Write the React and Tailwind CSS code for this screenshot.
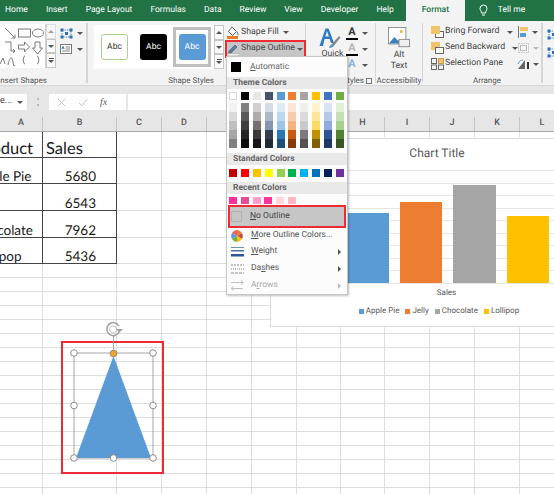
import React from 'react';

const tabs = ['Home', 'Insert', 'Page Layout', 'Formulas', 'Data', 'Review', 'View', 'Developer', 'Help'];

const themeCols = [
  ['bg-[#f2f2f2]', 'bg-[#d9d9d9]', 'bg-[#bfbfbf]', 'bg-[#a6a6a6]', 'bg-[#808080]'],
  ['bg-[#7f7f7f]', 'bg-[#595959]', 'bg-[#404040]', 'bg-[#262626]', 'bg-[#0d0d0d]'],
  ['bg-[#d0cece]', 'bg-[#afabab]', 'bg-[#767171]', 'bg-[#3a3838]', 'bg-[#171616]'],
  ['bg-[#d6dce5]', 'bg-[#adb9ca]', 'bg-[#8497b0]', 'bg-[#333f50]', 'bg-[#222a35]'],
  ['bg-[#deebf7]', 'bg-[#bdd7ee]', 'bg-[#9dc3e6]', 'bg-[#2e75b6]', 'bg-[#1f4e79]'],
  ['bg-[#fbe5d6]', 'bg-[#f8cbad]', 'bg-[#f4b183]', 'bg-[#c55a11]', 'bg-[#843c0c]'],
  ['bg-[#ededed]', 'bg-[#dbdbdb]', 'bg-[#c9c9c9]', 'bg-[#7b7b7b]', 'bg-[#525252]'],
  ['bg-[#fff2cc]', 'bg-[#ffe699]', 'bg-[#ffd966]', 'bg-[#bf9000]', 'bg-[#7f6000]'],
  ['bg-[#dae3f3]', 'bg-[#b4c7e7]', 'bg-[#8faadc]', 'bg-[#2f5597]', 'bg-[#1f3864]'],
  ['bg-[#e2f0d9]', 'bg-[#c5e0b4]', 'bg-[#a9d18e]', 'bg-[#548235]', 'bg-[#385723]'],
];
const themeTop = ['bg-white border border-[#d9d9d9]', 'bg-black', 'bg-[#e7e6e6]', 'bg-[#44546a]', 'bg-[#5b9bd5]', 'bg-[#ed7d31]', 'bg-[#a5a5a5]', 'bg-[#ffc000]', 'bg-[#4472c4]', 'bg-[#70ad47]'];
const standard = ['bg-[#c00000]', 'bg-[#ff0000]', 'bg-[#ffc000]', 'bg-[#ffff00]', 'bg-[#92d050]', 'bg-[#00b050]', 'bg-[#00b0f0]', 'bg-[#0070c0]', 'bg-[#002060]', 'bg-[#7030a0]'];
const recent = ['bg-[#ff2d9a]', 'bg-[#e64a9a]', 'bg-[#ff9ccc]', 'bg-[#ff3399]', 'bg-[#ffd6dc]', 'bg-[#ffb9c0]'];

const colWidths = ['w-[43px]', 'w-[74px]', 'w-[45px]', 'w-[45px]', 'w-[45px]', 'w-[45px]', 'w-[44px]', 'w-[44px]', 'w-[45px]', 'w-[45px]', 'w-[45px]', 'w-[45px]'];
const colNames = ['A', 'B', 'C', 'D', 'E', 'F', 'G', 'H', 'I', 'J', 'K', 'L'];

const tableRows = [
  { h: 'h-[26px]', a: 'Product', b: 'Sales', head: true, ml: '-ml-[24px]' },
  { h: 'h-[26px]', a: 'Apple Pie', b: '5680', ml: '-ml-[25px]' },
  { h: 'h-[27px]', a: 'Jelly', b: '6543', ml: '-ml-[28px]' },
  { h: 'h-[27px]', a: 'Chocolate', b: '7962', ml: '-ml-[27px]' },
  { h: 'h-[26px]', a: 'Lollipop', b: '5436', ml: '-ml-[25px]' },
];

const Caret = ({ className = 'border-t-[#555]' }) => (
  <span className={`inline-block w-0 h-0 border-x-[3px] border-x-transparent border-t-[3px] ${className}`} />
);

const ScrollBtn = ({ kind, className = '' }) => (
  <div className={`flex-1 flex flex-col items-center justify-center gap-[1px] bg-[#fafafa] border border-[#c6c6c6] ${className}`}>
    {kind === 'more' && <span className="w-[5px] h-px bg-[#555]" />}
    {kind === 'up' ? (
      <span className="w-0 h-0 border-x-[3px] border-x-transparent border-b-[3px] border-b-[#555]" />
    ) : (
      <Caret />
    )}
  </div>
);

const GroupLabel = ({ children, className = '' }) => (
  <div className={`h-[10px] leading-[10px] text-[8px] text-[#555] whitespace-nowrap ${className}`}>{children}</div>
);

const ShapesGallery = () => (
  <svg width="45" height="44" viewBox="0 0 45 44" fill="none" stroke="#6b6b6b" strokeWidth="0.9">
    <path d="M5 4l10 10M15 14v-3.500M15 14h-3.500" />
    <rect x="18.500" y="5" width="12" height="8" />
    <ellipse cx="38" cy="9" rx="5.500" ry="4" />
    <path d="M5 18h6v9h4M15 27l-2-2M15 27l-2 2" />
    <path d="M18.500 21h6v-3l5 5-5 5v-3h-6z" />
    <path d="M35 18h5v6h2.500l-5 6-5-6H35z" />
    <path d="M0 40l3-6 2 6" />
    <path d="M8 41c2-9 4-9 5-3s1 4 2 3" />
    <path d="M25 32c-2 0-1 3-2 4 1 1 0 4 2 4M37 32c2 0 1 3 2 4-1 1 0 4-2 4" />
  </svg>
);

const EditShapeIcon = () => (
  <svg width="13" height="11" viewBox="0 0 13 11" fill="#2f6fb5">
    <path d="M2 2h9v7H2z" fill="none" stroke="#2f6fb5" strokeWidth="0.8" strokeDasharray="1.500 1" />
    <rect x="0.500" y="0.500" width="3" height="3" />
    <rect x="9.500" y="0.500" width="3" height="3" />
    <rect x="0.500" y="7.500" width="3" height="3" />
    <rect x="9.500" y="7.500" width="3" height="3" />
    <rect x="5" y="4" width="3" height="3" />
  </svg>
);

const TextBoxIcon = () => (
  <svg width="12" height="10" viewBox="0 0 12 10" fill="none">
    <rect x="0.500" y="0.500" width="11" height="9" fill="#fff" stroke="#7a7a7a" />
    <path d="M5.500 3h4.500M5.500 5h4.500M2 7h8" stroke="#888" />
    <path d="M2 5l1-2.500L4 5" stroke="#2f6fb5" />
  </svg>
);

const AbcSwatch = ({ className }) => (
  <div className={`w-[27px] h-[26px] rounded-[3px] flex items-center justify-center text-[8.500px] ${className}`}>Abc</div>
);

const FillIcon = () => (
  <svg width="12" height="13" viewBox="0 0 12 13" fill="none">
    <path d="M5 1l4.500 4.500L5.500 9.500 1.500 5.500z" fill="#fff" stroke="#666" />
    <path d="M10 6c1 1.500 1.500 2.500 0.800 3.200" stroke="#5a8fc7" strokeWidth="1.200" />
    <rect y="10" width="11" height="3" fill="#ed7d31" />
  </svg>
);

const PenIcon = () => (
  <svg width="12" height="13" viewBox="0 0 12 13" fill="none">
    <path d="M2 8l6-6 2 2-6 6-2.500 0.500z" fill="#5b7ca3" stroke="#3d5573" strokeWidth="0.600" />
    <rect y="10.500" width="12" height="2.500" fill="#eee" stroke="#999" strokeWidth="0.500" />
  </svg>
);

const QuickStylesIcon = () => (
  <svg width="22" height="22" viewBox="0 0 22 22" fill="none">
    <path d="M0.500 19L6.500 1.500h3L15 16h-3l-1.300-4H5.500L4 19zM6.300 9.500h3.600L8 4z" fill="#2f78c4" />
    <path d="M12 18l8-9 1.500 1.500-7.500 9.500z" fill="#8a8a8a" />
    <path d="M10 21c1-3 2-4 3.500-3.500l1 1c-0.500 2-2.500 2.500-4.500 2.500z" fill="#5b9bd5" />
  </svg>
);

const LetterIcon = ({ bar, outline, blue }) => (
  <div className="w-[12px] h-[13px] flex flex-col items-center">
    <span
      className={`text-[11px] leading-[10px] font-bold ${blue ? 'text-[#8fb6df]' : outline ? 'text-[#b5b5b5]' : 'text-[#333]'}`}
    >
      A
    </span>
    {bar && <span className="w-[12px] h-[2px] bg-black mt-[1px]" />}
  </div>
);

const AltTextIcon = () => (
  <svg width="22" height="22" viewBox="0 0 24 24" fill="none">
    <rect x="0.500" y="0.500" width="19" height="18" fill="#fff" stroke="#8a8a8a" />
    <circle cx="14.500" cy="5" r="1.800" fill="#f2b84b" />
    <path d="M1 18l6-7 4 4 2-2 3 5z" fill="#3f7fbf" />
    <rect x="12" y="13.500" width="11.500" height="8" fill="#f0f0f0" stroke="#8a8a8a" />
  </svg>
);

const BringForwardIcon = () => (
  <svg width="13" height="12" viewBox="0 0 13 12">
    <rect x="4.500" y="5.500" width="8" height="6" fill="#fff" stroke="#666" />
    <rect x="0" y="0" width="9" height="8" fill="#f0c36d" />
  </svg>
);

const SendBackwardIcon = () => (
  <svg width="13" height="12" viewBox="0 0 13 12">
    <rect x="0" y="0" width="9" height="8" fill="#f0c36d" />
    <rect x="4.500" y="5.500" width="8" height="6" fill="#fff" stroke="#666" />
  </svg>
);

const SelectionPaneIcon = () => (
  <svg width="13" height="12" viewBox="0 0 13 12" fill="none">
    <rect x="0.500" y="0.500" width="5" height="5" stroke="#666" />
    <rect x="0.500" y="7" width="5" height="4.500" stroke="#666" />
    <rect x="7.500" y="0.500" width="5" height="5" fill="#f0c36d" stroke="#c9a04d" />
    <rect x="7.500" y="7" width="5" height="4.500" stroke="#666" />
  </svg>
);

const AlignIcon = () => (
  <svg width="12" height="12" viewBox="0 0 12 12">
    <rect x="1" y="0" width="1" height="12" fill="#777" />
    <rect x="3" y="1" width="8" height="4" fill="#f0c36d" />
    <rect x="3" y="7" width="6" height="4" fill="#5b9bd5" />
  </svg>
);

const GroupIcon = () => (
  <svg width="13" height="12" viewBox="0 0 13 12" fill="none" stroke="#bdbdbd">
    <rect x="1.500" y="1.500" width="10" height="9" strokeDasharray="1.500 1" />
    <rect x="3.500" y="3.500" width="6" height="5" />
  </svg>
);

const RotateIcon = () => (
  <svg width="13" height="11" viewBox="0 0 13 11">
    <path d="M1 10L8 1v9z" fill="#666" />
    <path d="M10 3h2v7h-2z" fill="#333" />
    <path d="M1 5c1-3 3-4 5-4" stroke="#5b9bd5" fill="none" />
  </svg>
);

const ColorWheel = () => (
  <svg width="12" height="12" viewBox="0 0 12 12">
    <path d="M6 6V0a6 6 0 0 1 5 3z" fill="#ed7d31" />
    <path d="M6 6l5-3a6 6 0 0 1 0 6z" fill="#c0504d" />
    <path d="M6 6l5 3a6 6 0 0 1-5 3z" fill="#ffc000" />
    <path d="M6 6v6a6 6 0 0 1-5-3z" fill="#70ad47" />
    <path d="M6 6L1 9a6 6 0 0 1 0-6z" fill="#5b9bd5" />
    <path d="M6 6L1 3a6 6 0 0 1 5-3z" fill="#e06666" />
  </svg>
);

const WeightIcon = () => (
  <svg width="13" height="10" viewBox="0 0 13 10">
    <rect width="13" height="1" y="0" fill="#6f8fb5" />
    <rect width="13" height="1.500" y="3" fill="#4a6f9e" />
    <rect width="13" height="2.500" y="7" fill="#2f5597" />
  </svg>
);

const DashesIcon = () => (
  <svg width="13" height="10" viewBox="0 0 13 10" fill="none" stroke="#8a8a8a">
    <path d="M0 1h13" strokeDasharray="2 1" />
    <path d="M0 5h13" strokeDasharray="1 1" />
    <path d="M0 9h13" strokeDasharray="3 1" />
  </svg>
);

const ArrowsIcon = () => (
  <svg width="13" height="11" viewBox="0 0 13 11" fill="none" stroke="#bdbdbd">
    <path d="M0 2.500h12M10 0.500l2.500 2-2.500 2M0 8.500h12M2.500 6.500L0 8.500l2.500 2" />
  </svg>
);

const MenuHeader = ({ children, className = '' }) => (
  <div className={`h-[12px] leading-[12px] pl-[6px] bg-[#e9e9e9] text-[8.500px] font-bold text-[#666] ${className}`}>{children}</div>
);

const SwatchRow = ({ items, className = '' }) => (
  <div className={`flex justify-between pl-[2px] pr-[3px] ${className}`}>
    {items.map((c, i) => (
      <span key={i} className={`w-[8px] ${c}`} />
    ))}
  </div>
);

const MenuItem = ({ icon, label, h, disabled, submenu }) => (
  <div className={`flex items-center pl-[4px] pr-[6px] ${h} ${disabled ? 'text-[#a8a8a8]' : 'text-[#555]'}`}>
    <span className="w-[20px] flex justify-start">{icon}</span>
    <span className="flex-1 text-[8.500px] whitespace-nowrap">{label}</span>
    {submenu && (
      <span className={`w-0 h-0 border-y-[3px] border-y-transparent border-l-[3px] ${disabled ? 'border-l-[#bbb]' : 'border-l-[#555]'}`} />
    )}
  </div>
);

const OutlineMenu = () => (
  <div className="absolute left-[226px] top-[56px] w-[122px] bg-[#fcfcfc] border border-[#c6c6c6] shadow-[1px_1px_2px_rgba(0,0,0,0.25)] z-20">
    <div className="h-[20px] flex items-center pl-[4px]">
      <span className="w-[10px] h-[10px] bg-black mr-[9px]" />
      <span className="text-[8.500px] text-[#666]">
        <u>A</u>utomatic
      </span>
    </div>
    <MenuHeader>Theme Colors</MenuHeader>
    <SwatchRow items={themeTop} className="h-[8px] mt-[3px]" />
    <div className="flex justify-between pl-[2px] pr-[3px] mt-[3px]">
      {themeCols.map((col, i) => (
        <div key={i} className="w-[8px] flex flex-col">
          {col.map((c) => (
            <span key={c} className={`h-[9px] ${c}`} />
          ))}
        </div>
      ))}
    </div>
    <MenuHeader className="mt-[5px]">Standard Colors</MenuHeader>
    <SwatchRow items={standard} className="h-[8px] mt-[4px]" />
    <MenuHeader className="mt-[5px]">Recent Colors</MenuHeader>
    <div className="flex gap-[3.800px] pl-[2px] h-[7px] mt-[3px]">
      {recent.map((c) => (
        <span key={c} className={`w-[8px] ${c}`} />
      ))}
    </div>
    <div className="mt-px mx-px border-2 border-[#ee2a33]">
      <div className="h-[19px] bg-[#c6c6c6] flex items-center pl-[1px]">
        <span className="w-[11px] h-[11px] border border-[#b0b0b0] mr-[8px]" />
        <span className="text-[8.500px] text-[#444]">
          <u>N</u>o Outline
        </span>
      </div>
    </div>
    <MenuItem
      h="h-[15px]"
      icon={<ColorWheel />}
      label={
        <>
          <u>M</u>ore Outline Colors...
        </>
      }
    />
    <MenuItem
      h="h-[17px]"
      icon={<WeightIcon />}
      submenu
      label={
        <>
          <u>W</u>eight
        </>
      }
    />
    <MenuItem
      h="h-[17px]"
      icon={<DashesIcon />}
      submenu
      label={
        <>
          Da<u>s</u>hes
        </>
      }
    />
    <MenuItem
      h="h-[17px]"
      icon={<ArrowsIcon />}
      submenu
      disabled
      label={
        <>
          A<u>r</u>rows
        </>
      }
    />
  </div>
);

const Ribbon = () => (
  <div className="h-[64px] flex bg-[#f3f3f3] text-[#444] overflow-hidden [&_svg]:shrink-0">
    {/* Insert Shapes */}
    <div className="w-[88px] shrink-0 mr-px flex flex-col border-r-2 border-[#d6d6d6] my-[2px]">
      <div className="h-[53px] shrink-0 pt-[1px] flex">
        <div className="w-[46px] h-[44px] bg-white border-r border-[#d0d0d0]">
          <ShapesGallery />
        </div>
        <div className="w-[10px] h-[44px] flex flex-col">
          <ScrollBtn kind="up" className="opacity-50" />
          <ScrollBtn kind="down" />
          <ScrollBtn kind="more" />
        </div>
        <div className="ml-[4px] pt-[4px] flex flex-col gap-[5px]">
          <div className="flex items-center gap-[4px]">
            <EditShapeIcon />
            <Caret />
          </div>
          <div className="flex items-center gap-[5px]">
            <TextBoxIcon />
            <Caret />
          </div>
        </div>
      </div>
      <GroupLabel className="-ml-[2px] shrink-0">Insert Shapes</GroupLabel>
    </div>

    {/* Shape Styles */}
    <div className="w-[217px] shrink-0 flex border-r border-[#d6d6d6] my-[2px]">
      <div className="w-[135px] shrink-0 flex flex-col pl-[5px]">
        <div className="h-[53px] shrink-0 pt-[2px] flex">
          <div className="w-[120px] h-[44px] bg-white flex items-center pl-[7px]">
            <AbcSwatch className="bg-white border border-[#a9d18e] text-[#333]" />
            <AbcSwatch className="ml-[12px] bg-black text-white" />
            <div className="ml-[6px] w-[38px] h-[40px] border-[3px] border-[#bfbfbf] flex items-center justify-center">
              <AbcSwatch className="bg-[#5b9bd5] text-white" />
            </div>
          </div>
          <div className="w-[10px] h-[44px] flex flex-col">
            <ScrollBtn kind="up" />
            <ScrollBtn kind="down" />
            <ScrollBtn kind="more" />
          </div>
        </div>
        <GroupLabel className="text-right pr-[10px] shrink-0">Shape Styles</GroupLabel>
      </div>
      <div className="pt-[2px] pl-px flex flex-col">
        <div className="h-[15px] flex items-center gap-[2px] pl-[2px] text-[8.750px] text-[#444] whitespace-nowrap">
          <FillIcon />
          Shape Fill
          <span className="ml-[2px] flex">
            <Caret />
          </span>
        </div>
        <div className="w-[81px] h-[18px] border-2 border-[#ee2a33] bg-[#c6c6c6] flex items-center gap-[2px] text-[8.750px] text-[#444] whitespace-nowrap">
          <PenIcon />
          Shape Outline
          <Caret />
        </div>
      </div>
    </div>

    {/* WordArt Styles */}
    <div className="w-[70px] shrink-0 flex flex-col border-r border-[#d6d6d6] my-[2px]">
      <div className="h-[53px] shrink-0 flex">
        <div className="pl-[13px] pt-[4px] w-[40px] flex flex-col">
          <QuickStylesIcon />
          <span className="text-[8.750px] leading-[10px] text-center">Quick</span>
        </div>
        <div className="pt-[4px] flex flex-col gap-[3px]">
          <div className="flex items-center gap-[4px]">
            <LetterIcon bar />
            <Caret />
          </div>
          <div className="flex items-center gap-[4px]">
            <LetterIcon bar outline />
            <Caret />
          </div>
          <div className="flex items-center gap-[4px]">
            <LetterIcon blue />
            <Caret />
          </div>
        </div>
      </div>
      <GroupLabel className="flex shrink-0 justify-end items-center gap-[2px] pr-[3px]">
        WordArt Styles
        <span className="w-[6px] h-[6px] border border-[#777]" />
      </GroupLabel>
    </div>

    {/* Accessibility */}
    <div className="w-[47px] shrink-0 flex flex-col items-center border-r border-[#d6d6d6] my-[2px]">
      <div className="h-[53px] shrink-0 pt-[4px] flex flex-col items-center">
        <AltTextIcon />
        <span className="text-[8.750px] leading-[11px] mt-[1px]">Alt</span>
        <span className="text-[8.750px] leading-[11px]">Text</span>
      </div>
      <GroupLabel className="shrink-0">Accessibility</GroupLabel>
    </div>

    {/* Arrange */}
    <div className="w-[120px] shrink-0 flex flex-col border-r-2 border-[#d6d6d6] my-[2px]">
      <div className="h-[53px] shrink-0 pl-[8px] pt-[1px] flex text-[8.750px] whitespace-nowrap">
        <div className="w-[85px] flex flex-col">
          <div className="h-[16px] flex items-center gap-[1px]">
            <BringForwardIcon />
            Bring Forward
            <span className="ml-[7px] flex">
              <Caret />
            </span>
          </div>
          <div className="h-[16px] flex items-center gap-[1px]">
            <SendBackwardIcon />
            Send Backward
            <span className="ml-[6px] flex">
              <Caret />
            </span>
          </div>
          <div className="h-[16px] flex items-center gap-[1px]">
            <SelectionPaneIcon />
            Selection Pane
          </div>
        </div>
        <div className="flex flex-col pl-[1px]">
          <div className="h-[16px] flex items-center gap-[3px]">
            <AlignIcon />
            <Caret />
          </div>
          <div className="h-[16px] flex items-center gap-[3px]">
            <GroupIcon />
            <Caret className="border-t-[#bbb]" />
          </div>
          <div className="h-[16px] flex items-center gap-[3px]">
            <RotateIcon />
            <Caret />
          </div>
        </div>
      </div>
      <GroupLabel className="text-center pl-[10px] shrink-0">Arrange</GroupLabel>
    </div>

    <div className="pl-[4px] pt-[8px] flex flex-col gap-[7px]">
      <EditShapeIcon />
      <EditShapeIcon />
    </div>
  </div>
);

const FormulaBar = () => (
  <div className="h-[32px] pt-[8px] pb-[7px] flex bg-[#e6e6e6] border-t border-[#d6d6d6]">
    <div className="w-[28px] bg-white flex items-center justify-between pr-[4px] -ml-px text-[9px] text-[#444]">
      <span className="pl-px">e...</span>
      <Caret />
    </div>
    <div className="w-[22px] flex items-center justify-center">
      <span className="w-[2px] h-[8px] border-y-2 border-[#bbb]" />
    </div>
    <div className="w-[77px] bg-white flex items-center pl-[8px] gap-[12px]">
      <svg width="9" height="9" viewBox="0 0 9 9" stroke="#c4c4c4" fill="none">
        <path d="M1 1l7 7M8 1L1 8" />
      </svg>
      <svg width="10" height="9" viewBox="0 0 10 9" stroke="#c4c4c4" fill="none">
        <path d="M1 5l3 3 5-7" />
      </svg>
      <span className="text-[10px] italic font-['Liberation_Serif',serif] text-[#555]">fx</span>
    </div>
    <div className="ml-[2px] flex-1 bg-white" />
  </div>
);

const ColumnHeaders = () => (
  <div className="h-[15px] flex bg-[#e6e6e6] border-b border-[#a8a8a8] text-[9px] font-medium text-[#555]">
    {colNames.map((name, i) => (
      <div key={name} className={`${colWidths[i]} shrink-0 border-r border-[#c4c4c4] flex items-center justify-center`}>
        {name}
      </div>
    ))}
  </div>
);

const TableRow = ({ row }) => (
  <div className={`flex ${row.h} font-['Lato',sans-serif] text-[#1a1a1a]`}>
    <div className="w-[43px] shrink-0 border-r border-b border-[#444] overflow-hidden flex items-end">
      <span className={`${row.ml} ${row.head ? 'text-[16.500px] leading-[18px]' : 'text-[13.500px] leading-[14px]'} whitespace-nowrap`}>
        {row.a}
      </span>
    </div>
    <div className={`w-[74px] shrink-0 border-r border-b border-[#444] flex items-end ${row.head ? 'pl-[3px]' : 'justify-end pr-[20px]'}`}>
      <span className={row.head ? 'text-[16.500px] leading-[18px]' : 'text-[13.500px] leading-[14px]'}>{row.b}</span>
    </div>
    {colWidths.slice(2).map((w, i) => (
      <div key={i} className={`${w} shrink-0 border-r border-b border-[#dedede]`} />
    ))}
  </div>
);

const BlankRow = () => (
  <div className="flex h-[14px]">
    {colWidths.map((w, i) => (
      <div key={i} className={`${w} shrink-0 border-r border-b border-[#dedede]`} />
    ))}
  </div>
);

const LegendItem = ({ color, label }) => (
  <span className="flex items-center gap-[2px]">
    <span className={`w-[5px] h-[5px] ${color}`} />
    {label}
  </span>
);

const Chart = () => (
  <div className="absolute left-[270px] top-[21px] w-[334px] h-[189px] bg-white border border-[#dcdcdc] text-[#595959]">
    <div className="h-[29px] pt-[4px] text-center text-[12px] leading-[20px]">Chart Title</div>
    <svg width="334" height="116" viewBox="0 0 334 116" className="block">
      {[0, 13, 25, 38, 50, 63, 75, 88, 100, 113].map((y) => (
        <line key={y} x1="60" x2="334" y1={y + 2.500} y2={y + 2.500} stroke="#e6e6e6" />
      ))}
      <rect x="76" y="45" width="42" height="70" fill="#5b9bd5" />
      <rect x="129" y="34" width="42" height="81" fill="#ed7d31" />
      <rect x="182" y="17" width="43" height="98" fill="#a5a5a5" />
      <rect x="236" y="48" width="42" height="67" fill="#ffc000" />
    </svg>
    <div className="pl-[19px] pt-[3px] text-center text-[8px] leading-[12px]">Sales</div>
    <div className="pl-[4px] pt-[6px] flex justify-center gap-[6px] text-[8px] leading-[12px]">
      <LegendItem color="bg-[#5b9bd5]" label="Apple Pie" />
      <LegendItem color="bg-[#ed7d31]" label="Jelly" />
      <LegendItem color="bg-[#a5a5a5]" label="Chocolate" />
      <LegendItem color="bg-[#ffc000]" label="Lollipop" />
    </div>
  </div>
);

const ShapeSelection = () => (
  <div className="absolute left-[61px] top-[224px] w-[103px] h-[133px] border-2 border-[#ee2a33]">
    <svg width="99" height="149" viewBox="61 318 99 149" className="absolute -left-[2px] -top-[25px] overflow-visible">
      <path d="M113.500 336V353" stroke="#a6a6a6" />
      <rect x="74" y="353" width="79" height="105" fill="none" stroke="#a6a6a6" />
      <path d="M113.500 356L151 458H76z" fill="#5b9bd5" />
      <g fill="#fff" stroke="#8c8c8c">
        <circle cx="74" cy="353" r="3.300" />
        <circle cx="153" cy="353" r="3.300" />
        <circle cx="74" cy="405.500" r="3.300" />
        <circle cx="153" cy="405.500" r="3.300" />
        <circle cx="74" cy="458" r="3.300" />
        <circle cx="113.500" cy="458" r="3.300" />
        <circle cx="153" cy="458" r="3.300" />
      </g>
      <circle cx="113.500" cy="353.500" r="3.300" fill="#f5a623" stroke="#8c8c8c" />
      <path d="M119 326a6.500 6.500 0 1 0 0.500 5" fill="none" stroke="#a0a0a0" strokeWidth="1.500" />
      <path d="M116.500 329a3.500 3.500 0 1 0 0 1" fill="none" stroke="#c0c0c0" />
      <path d="M116 329h7l-3.500 3.500z" fill="#a0a0a0" />
    </svg>
  </div>
);

const Sheet = () => (
  <div className="relative">
    <ColumnHeaders />
    {tableRows.map((row) => (
      <TableRow key={row.b} row={row} />
    ))}
    {Array.from({ length: 17 }).map((_, i) => (
      <BlankRow key={i} />
    ))}
    <Chart />
    <ShapeSelection />
  </div>
);

export default function App() {
  return (
    <div className="relative w-[554px] h-[494px] overflow-hidden bg-white font-['Roboto',sans-serif] [text-rendering:geometricPrecision]">
      <div className="h-[21px] flex items-center bg-[#217346] text-white text-[8.500px] pl-[5px]">
        <div className="flex gap-[18px]">
          {tabs.map((t) => (
            <span key={t} className="whitespace-nowrap">
              {t}
            </span>
          ))}
        </div>
        <div className="ml-[12px] w-[59px] h-full bg-[#f3f3f3] text-[#217346] font-medium flex items-center justify-center">
          Format
        </div>
        <svg width="9" height="13" viewBox="0 0 9 13" fill="none" stroke="#fff" className="ml-[14px] shrink-0">
          <path d="M2.500 9C2.500 7 1 6.500 1 4.500a3.500 3.500 0 0 1 7 0C8 6.500 6.500 7 6.500 9zM3 11h3" />
        </svg>
        <span className="ml-[10px] whitespace-nowrap">Tell me</span>
      </div>
      <Ribbon />
      <FormulaBar />
      <Sheet />
      <OutlineMenu />
    </div>
  );
}
